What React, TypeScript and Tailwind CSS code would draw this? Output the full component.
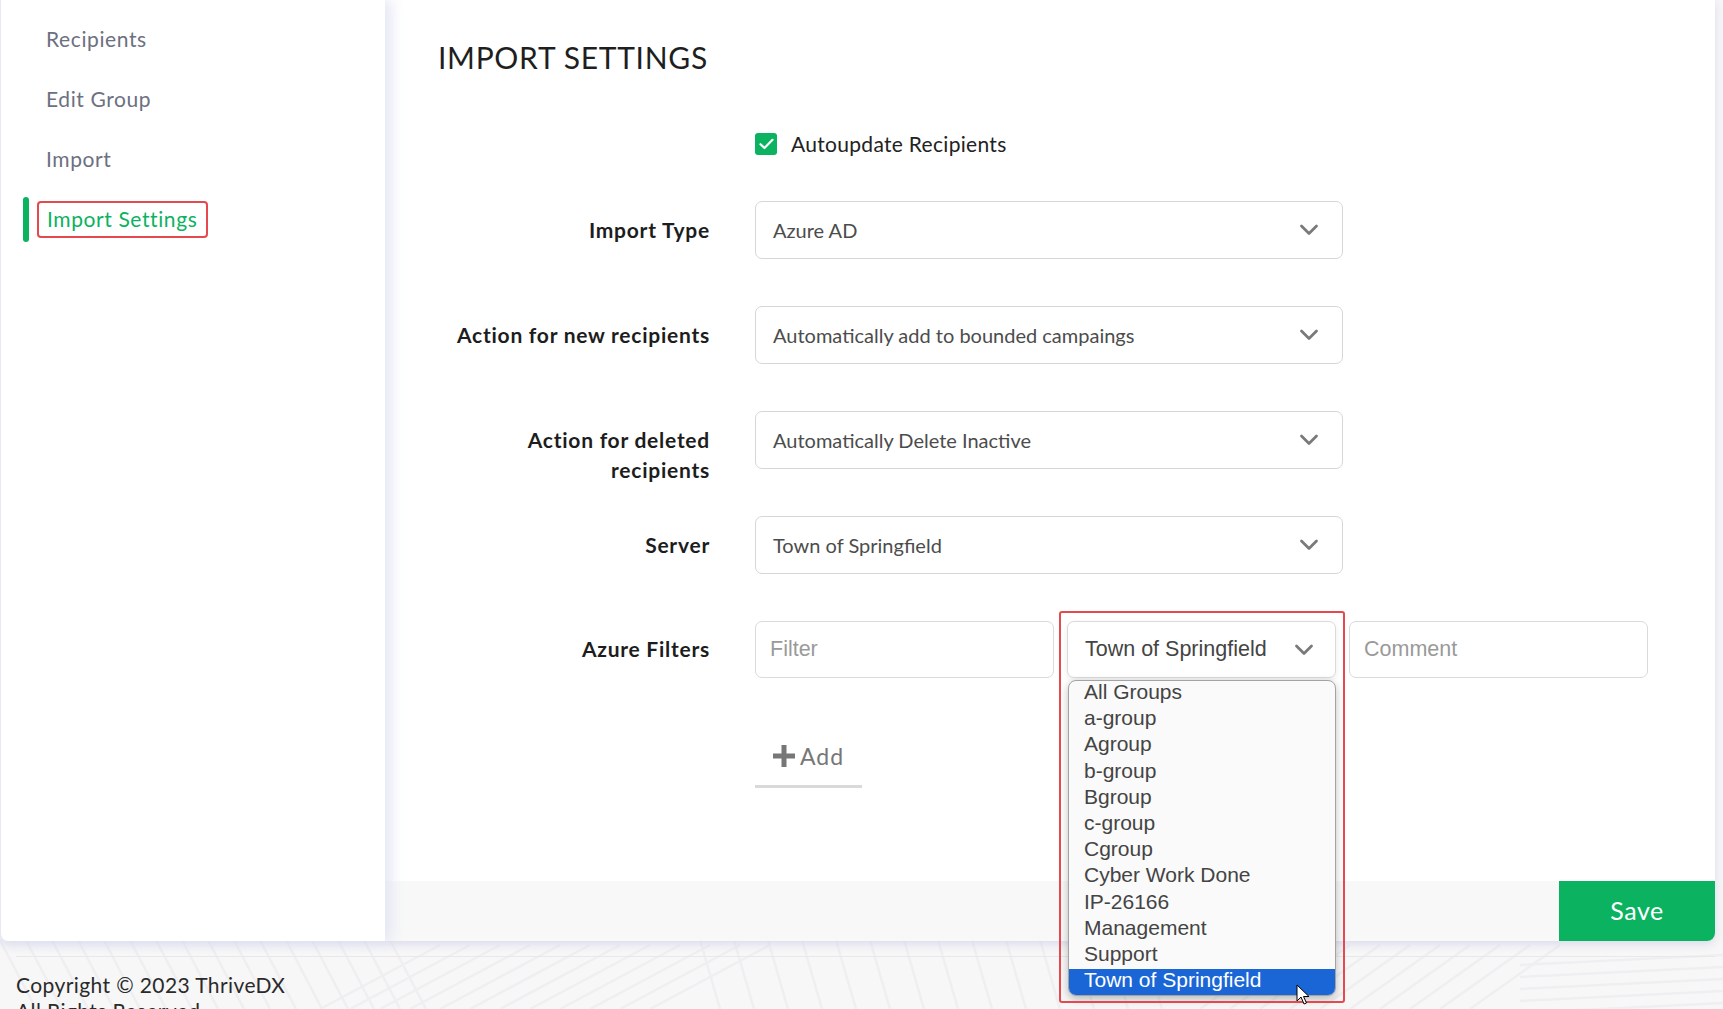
import React from "react";

const ui = { fontFamily: "Lato, 'Noto Sans', sans-serif" };
const arial = { fontFamily: "'Liberation Sans', Arial, sans-serif" };

function Chevron({ className = "" }: { className?: string }) {
  return (
    <svg width="20" height="12" viewBox="0 0 20 12" className={className} fill="none">
      <path d="M2.5 2 L10 9.5 L17.5 2" stroke="#7a7a7a" strokeWidth="2.8" strokeLinecap="round" strokeLinejoin="round" />
    </svg>
  );
}

function Select({ value }: { value: string }) {
  return (
    <div className="flex h-[58px] w-[588px] items-center justify-between rounded-[7px] border border-[#d6d6d6] bg-white pl-[17px] pr-[23px]">
      <span className="text-[20px] text-[#4c4c4c]">{value}</span>
      <Chevron />
    </div>
  );
}

function Row({ label, children }: { label: React.ReactNode; children: React.ReactNode }) {
  return (
    <div className="flex h-[58px] gap-[45px]">
      <div className="w-[272px] shrink-0 pt-[14px] text-right text-[21px] font-bold leading-[30px] tracking-[0.75px] text-[#1d1d1d]">
        {label}
      </div>
      {children}
    </div>
  );
}

const groups = [
  "All Groups",
  "a-group",
  "Agroup",
  "b-group",
  "Bgroup",
  "c-group",
  "Cgroup",
  "Cyber Work Done",
  "IP-26166",
  "Management",
  "Support",
  "Town of Springfield",
];

function Pattern() {
  const lines: React.ReactNode[] = [];
  for (let i = 0; i < 16; i++) {
    const x = i * 26;
    lines.push(<line key={"a" + i} x1={x} y1={940} x2={x + 36} y2={1009} />);
  }
  for (let i = 0; i < 12; i++) {
    const x = 320 + i * 30;
    lines.push(<line key={"b" + i} x1={x} y1={1009} x2={x + 120} y2={945} />);
  }
  for (let i = 0; i < 14; i++) {
    const x = 700 + i * 34;
    lines.push(<line key={"c" + i} x1={x} y1={940} x2={x + 20} y2={1009} />);
  }
  for (let i = 0; i < 10; i++) {
    const x = 1200 + i * 30;
    lines.push(<line key={"e" + i} x1={x} y1={1009} x2={x + 90} y2={945} />);
  }
  for (let i = 0; i < 5; i++) {
    const y = 965 + i * 12;
    lines.push(<line key={"d" + i} x1={1520} y1={y} x2={1723} y2={y - 10} />);
  }
  return (
    <svg className="absolute inset-0" width="1723" height="1009" stroke="#efeff2" strokeWidth="2.5">
      {lines}
    </svg>
  );
}

export default function App() {
  return (
    <div className="relative h-[1009px] w-[1723px] overflow-hidden bg-[#f7f7f8]" style={ui}>
      <Pattern />
      <div className="relative flex h-[941px] w-[1715px] rounded-b-[8px] shadow-[0_3px_10px_rgba(205,205,230,0.7)]">
        {/* Sidebar */}
        <aside className="relative z-10 w-[385px] shrink-0 rounded-bl-[8px] border-l border-[#e8e8f0] bg-white pt-[9px] shadow-[6px_0_14px_rgba(225,227,242,0.9)]">
          {["Recipients", "Edit Group", "Import"].map((t) => (
            <div key={t} className="flex h-[60px] items-center pl-[45px] text-[21px] tracking-[0.6px] text-[#6c7080]">
              {t}
            </div>
          ))}
          <div className="relative flex h-[60px] items-center">
            <div className="absolute left-[22px] top-[8px] h-[45px] w-[6px] rounded-full bg-[#0bb25f]" />
            <div className="ml-[36px] flex h-[37px] items-center rounded-[4px] border-2 border-[#e5484d] pl-[8px] pr-[9px] text-[21px] tracking-[0.6px] text-[#0bb25f]">
              Import Settings
            </div>
          </div>
        </aside>

        {/* Main */}
        <main className="flex flex-1 flex-col rounded-br-[8px] bg-white">
          <div className="flex-1 pl-[53px] pt-[39px]">
            <h1 className="text-[30px] font-normal leading-[36px] tracking-[0.7px] text-[#1f1f1f]">IMPORT SETTINGS</h1>

            <div className="mt-[54px] flex h-[30px] items-center pl-[317px]">
              <div className="flex h-[22px] w-[22px] items-center justify-center rounded-[3px] bg-[#0bb25f]">
                <svg width="15" height="12" viewBox="0 0 15 12" fill="none">
                  <path d="M1.5 6.2 L5.5 10 L13.5 1.8" stroke="white" strokeWidth="2.2" strokeLinecap="round" strokeLinejoin="round" />
                </svg>
              </div>
              <span className="ml-[14px] text-[21px] tracking-[0.3px] text-[#222]">Autoupdate Recipients</span>
            </div>

            <div className="mt-[42px] flex flex-col gap-[47px]">
              <Row label="Import Type">
                <Select value="Azure AD" />
              </Row>
              <Row label="Action for new recipients">
                <Select value="Automatically add to bounded campaings" />
              </Row>
              <Row
                label={
                  <>
                    Action for deleted
                    <br />
                    recipients
                  </>
                }
              >
                <Select value="Automatically Delete Inactive" />
              </Row>
              <Row label="Server">
                <Select value="Town of Springfield" />
              </Row>
              <div className="flex h-[57px] gap-[45px]">
                <div className="w-[272px] shrink-0 pt-[13px] text-right text-[21px] font-bold leading-[30px] tracking-[0.75px] text-[#1d1d1d]">
                  Azure Filters
                </div>
                <div className="flex gap-[13px]" style={arial}>
                  <div className="flex h-[57px] w-[299px] items-center rounded-[7px] border border-[#dadada] bg-white pl-[14px] text-[21.5px] text-[#9a9a9a]">
                    Filter
                  </div>
                  <div className="relative h-[57px] w-[269px]">
                    <div className="flex h-full w-full items-center justify-between rounded-[7px] border border-[#dadada] bg-white pl-[17px] pr-[21px] text-[21.5px] text-[#444] shadow-[0_2px_6px_rgba(0,0,0,0.08)]">
                      <span>Town of Springfield</span>
                      <Chevron />
                    </div>
                    <div className="absolute left-[1px] top-[59px] z-20 w-[268px] overflow-hidden rounded-[8px] border border-[#a3a3a3] bg-[#fafafa] shadow-[0_3px_8px_rgba(0,0,0,0.25)]">
                      {groups.map((g, i) => (
                        <div
                          key={g}
                          className={
                            i === groups.length - 1
                              ? "h-[26.2px] bg-[#1a66d6] pl-[15px] text-[21px] leading-[22px] text-white"
                              : "h-[26.2px] pl-[15px] text-[21px] leading-[22px] text-[#444]"
                          }
                        >
                          {g}
                        </div>
                      ))}
                    </div>
                    <div className="pointer-events-none absolute left-[-8px] top-[-10px] z-30 h-[392px] w-[286px] rounded-[3px] border-2 border-[#e5484d]" />
                  </div>
                  <div className="flex h-[57px] w-[299px] items-center rounded-[7px] border border-[#dadada] bg-white pl-[14px] text-[21.5px] text-[#9a9a9a]">
                    Comment
                  </div>
                </div>
              </div>
            </div>

            <div className="ml-[317px] mt-[60px] flex h-[50px] w-[107px] items-center gap-[5px] border-b-[3px] border-[#d9d9d9] pb-[11px] pl-[18px]">
              <svg width="22" height="22" viewBox="0 0 22 22">
                <rect x="8.5" y="0" width="5" height="22" fill="#777" />
                <rect x="0" y="8.5" width="22" height="5" fill="#777" />
              </svg>
              <span className="text-[23px] tracking-[1px] text-[#777]">Add</span>
            </div>
          </div>

          <div className="flex h-[60px] shrink-0 justify-end rounded-br-[8px] bg-[#f8f8f8]">
            <button className="flex h-[60px] w-[156px] items-center justify-center rounded-br-[8px] bg-[#0bb25f] text-[25px] tracking-[0.5px] text-white">
              Save
            </button>
          </div>
        </main>
      </div>

      {/* Footer */}
      <div className="relative mx-[16px] mt-[15px] w-[1699px] border-t border-[#e8e8ea] pt-[15px] text-[21px] leading-[26px] tracking-[0.4px] text-[#2a2a2a]">
        <div>Copyright © 2023 ThriveDX</div>
        <div>All Rights Reserved</div>
      </div>

      {/* Mouse cursor */}
      <svg className="absolute left-[1296px] top-[984px] z-40" width="14" height="22" viewBox="0 0 14 22">
        <path d="M1 1 L1 17 L5 13 L8 20 L10.5 19 L7.5 12.5 L13 12.5 Z" fill="white" stroke="black" strokeWidth="1" strokeLinejoin="round" />
      </svg>
    </div>
  );
}
